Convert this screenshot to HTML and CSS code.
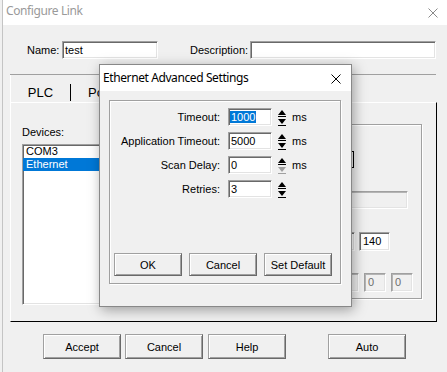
FILE: index.html
```html
<!DOCTYPE html>
<html lang="en">
<head>
    <meta charset="UTF-8">
    <meta name="viewport" content="width=device-width, initial-scale=1.0">
    <title>Configure Link</title>
    <link rel="stylesheet" href="styles.css">
</head>
<body>
    <div class="window">
        <div class="titlebar">
            <span class="title">Configure Link</span>
            <svg class="close" width="10" height="10" viewBox="0 0 10 10"><path d="M0.5 0.5 L9.5 9.5 M9.5 0.5 L0.5 9.5" stroke="#8a8a8a" stroke-width="1" fill="none"/></svg>
        </div>

        <div class="name-row">
            <span class="name-label">Name:</span>
            <div class="edit name-edit">test</div>
            <span class="desc-label">Description:</span>
            <div class="edit desc-edit"></div>
        </div>

        <div class="tabs">
            <div class="tab active">PLC</div>
            <div class="tab-sep"></div>
            <div class="tab">Port</div>
        </div>

        <div class="panel">
            <div class="devices">
                <div class="label">Devices:</div>
                <div class="edit listbox">
                    <div class="item">COM3</div>
                    <div class="item selected">Ethernet</div>
                </div>
            </div>
            <!-- right hand group, mostly hidden by the dialog -->
            <div class="plc-group">
                <div class="prow r1"><div class="bracket"></div></div>
                <div class="prow r2"><div class="edit disabled wide"></div></div>
                <div class="prow r3"><div class="edit part"></div><div class="edit num">140</div></div>
                <div class="prow r4"><div class="edit disabled part"></div><div class="edit disabled tiny">0</div><div class="edit disabled tiny">0</div></div>
            </div>
        </div>

        <div class="buttons">
            <button class="btn main-btn">Accept</button>
            <button class="btn main-btn cancel-btn">Cancel</button>
            <button class="btn main-btn help-btn">Help</button>
            <button class="btn main-btn auto-btn">Auto</button>
        </div>

        <div class="dialog">
            <div class="d-titlebar">
                <span class="d-title">Ethernet Advanced Settings</span>
                <svg class="d-close" width="10" height="10" viewBox="0 0 10 10"><path d="M0.5 0.5 L9.5 9.5 M9.5 0.5 L0.5 9.5" stroke="#000" stroke-width="1" fill="none"/></svg>
            </div>
            <div class="d-body">
                <div class="d-group">
                    <div class="d-fields">
                        <div class="d-row">
                            <span class="d-label">Timeout:</span>
                            <div class="edit spin-edit"><span class="sel">1000</span></div>
                            <svg class="spin" width="10" height="18" viewBox="0 0 10 18">
                                <path d="M1 7 L5 2 L9 7 Z" fill="#000"/>
                                <rect x="1" y="8" width="8" height="1" fill="#000"/>
                                <path d="M1 11 L9 11 L5 16 Z" fill="#000"/>
                                <rect x="1" y="17" width="8" height="1" fill="#000"/>
                            </svg>
                            <span class="unit">ms</span>
                        </div>
                        <div class="d-row">
                            <span class="d-label">Application Timeout:</span>
                            <div class="edit spin-edit">5000</div>
                            <svg class="spin" width="10" height="18" viewBox="0 0 10 18">
                                <path d="M1 7 L5 2 L9 7 Z" fill="#000"/>
                                <rect x="1" y="8" width="8" height="1" fill="#000"/>
                                <path d="M1 11 L9 11 L5 16 Z" fill="#000"/>
                                <rect x="1" y="17" width="8" height="1" fill="#000"/>
                            </svg>
                            <span class="unit">ms</span>
                        </div>
                        <div class="d-row">
                            <span class="d-label">Scan Delay:</span>
                            <div class="edit spin-edit">0</div>
                            <svg class="spin" width="10" height="18" viewBox="0 0 10 18">
                                <path d="M1 7 L5 2 L9 7 Z" fill="#000"/>
                                <rect x="1" y="8" width="8" height="1" fill="#000"/>
                                <path d="M1 11 L9 11 L5 16 Z" fill="#a0a0a0"/>
                                <rect x="1" y="17" width="8" height="1" fill="#a0a0a0"/>
                            </svg>
                            <span class="unit">ms</span>
                        </div>
                        <div class="d-row">
                            <span class="d-label">Retries:</span>
                            <div class="edit spin-edit">3</div>
                            <svg class="spin" width="10" height="18" viewBox="0 0 10 18">
                                <path d="M1 7 L5 2 L9 7 Z" fill="#000"/>
                                <rect x="1" y="8" width="8" height="1" fill="#000"/>
                                <path d="M1 11 L9 11 L5 16 Z" fill="#000"/>
                                <rect x="1" y="17" width="8" height="1" fill="#000"/>
                            </svg>
                        </div>
                    </div>
                    <div class="d-buttons">
                        <button class="btn d-btn">OK</button>
                        <button class="btn d-btn">Cancel</button>
                        <button class="btn d-btn">Set Default</button>
                    </div>
                </div>
            </div>
        </div>
    </div>
</body>
</html>
```

FILE: styles.css
```css
body {
    margin: 0;
    padding: 0;
    background: #f0f0f0;
    font-family: "Liberation Sans", Arial, sans-serif;
    font-size: 11px;
    color: #000;
    overflow: hidden;
}

.window {
    position: relative;
    margin-left: 2px;
    width: 444px;
    height: 372px;
    border-left: 1px solid #c4c4c4;
}

/* title bar */
.titlebar {
    display: flex;
    height: 25px;
    background: #fff;
    padding-left: 3px;
}

.title {
    font-family: "Noto Sans", sans-serif;
    font-size: 12px;
    letter-spacing: -0.4px;
    line-height: 22px;
    color: #9a9a9a;
}

.close {
    margin-left: auto;
    margin-right: 9px;
    margin-top: 8px;
}

/* name / description */
.name-row {
    display: flex;
    align-items: center;
    height: 18px;
    margin-top: 16px;
    padding-left: 24px;
}

.name-label {
    width: 35px;
}

.name-edit {
    width: 96px;
    height: 18px;
}

.desc-label {
    width: 60px;
    margin-left: 32px;
    white-space: nowrap;
}

.desc-edit {
    width: 186px;
    height: 18px;
}

/* sunken edit box */
.edit {
    box-sizing: border-box;
    background: #fff;
    border: 1px solid;
    border-color: #a0a0a0 #fff #fff #a0a0a0;
    box-shadow: inset 1px 1px 0 #696969, inset -1px -1px 0 #e3e3e3;
    padding-left: 2px;
    line-height: 16px;
    white-space: nowrap;
    overflow: hidden;
}

.edit.disabled {
    background: #f0f0f0;
    color: #6d6d6d;
    box-shadow: inset 1px 1px 0 #b4b4b4, inset -1px -1px 0 #e3e3e3;
}

/* tabs */
.tabs {
    display: flex;
    margin-top: 15px;
    margin-left: 7px;
    width: 426px;
    height: 28px;
    box-sizing: border-box;
    border-top: 1px solid #a0a0a0;
}

.tab {
    font-size: 13px;
    line-height: 15px;
    padding-top: 10px;
}

.tab.active {
    width: 60px;
    text-align: center;
    box-sizing: border-box;
    border-left: 1px solid #fff;
}

.tab-sep {
    width: 1px;
    height: 17px;
    margin-top: 9px;
    background: #000;
}

.tab-sep + .tab {
    padding-left: 17px;
}

/* panel */
.panel {
    display: flex;
    box-sizing: border-box;
    margin-left: 7px;
    width: 427px;
    height: 220px;
    border-top: 1px solid #fff;
    border-left: 1px solid #fff;
    border-right: 1px solid #000;
    border-bottom: 1px solid #000;
}

.devices {
    padding-left: 11px;
    padding-top: 23px;
}

.label {
    line-height: 13px;
}

.listbox {
    margin-top: 5px;
    width: 130px;
    height: 161px;
    padding-left: 0;
    line-height: 13px;
}

.item {
    height: 13px;
    padding-left: 3px;
}

.item.selected {
    background: #0078d7;
    color: #fff;
}

.plc-group {
    box-sizing: border-box;
    margin-left: auto;
    margin-right: 14px;
    margin-top: 21px;
    width: 250px;
    height: 175px;
    border: 1px solid #a0a0a0;
    box-shadow: inset 1px 1px 0 #fff, 1px 1px 0 #fff;
}

.prow {
    display: flex;
    justify-content: flex-end;
}

.r1 {
    margin-top: 26px;
    margin-right: 67px;
    height: 17px;
}

.bracket {
    box-sizing: border-box;
    width: 20px;
    height: 17px;
    border: 1px solid #000;
    border-left: none;
}

.r2 {
    margin-top: 23px;
    margin-right: 13px;
}

.wide {
    width: 150px;
    height: 18px;
}

.r3 {
    margin-top: 23px;
    margin-right: 31px;
    gap: 4px;
}

.part {
    width: 40px;
    height: 19px;
}

.num {
    width: 31px;
    height: 19px;
    padding-left: 3px;
    line-height: 17px;
}

.r4 {
    margin-top: 22px;
    margin-right: 8px;
    gap: 5px;
}

.tiny {
    width: 22px;
    height: 19px;
    padding-left: 3px;
    line-height: 17px;
}

/* buttons */
.btn {
    box-sizing: border-box;
    margin: 0;
    padding: 0;
    background: #f0f0f0;
    font-family: "Liberation Sans", Arial, sans-serif;
    font-size: 11px;
    color: #000;
    border: 1px solid;
    border-color: #a0a0a0 #696969 #696969 #a0a0a0;
    box-shadow: inset 1px 1px 0 #fff, inset -1px -1px 0 #a0a0a0;
}

.buttons {
    display: flex;
    margin-top: 12px;
    padding-left: 40px;
}

.main-btn {
    width: 78px;
    height: 25px;
}

.cancel-btn {
    margin-left: 4px;
}

.help-btn {
    margin-left: 5px;
}

.auto-btn {
    margin-left: 42px;
}

/* dialog on top */
.dialog {
    position: absolute;
    left: 96px;
    top: 64px;
    width: 253px;
    height: 243px;
    box-sizing: border-box;
    border: 1px solid #888;
    background: #f0f0f0;
    box-shadow: 2px 3px 12px rgba(0, 0, 0, 0.35);
}

.d-titlebar {
    display: flex;
    height: 26px;
    background: #fff;
    padding-left: 3px;
}

.d-title {
    font-family: "Noto Sans", sans-serif;
    font-size: 12px;
    letter-spacing: -0.4px;
    line-height: 25px;
}

.d-close {
    margin-left: auto;
    margin-right: 10px;
    margin-top: 9px;
}

.d-body {
    padding-top: 9px;
    padding-left: 9px;
}

.d-group {
    box-sizing: border-box;
    width: 232px;
    height: 184px;
    padding-top: 7px;
    border: 1px solid #a0a0a0;
    box-shadow: inset 1px 1px 0 #fff, 1px 1px 0 #fff;
}

.d-row {
    display: flex;
    align-items: center;
    height: 18px;
    margin-bottom: 6px;
}

.d-row:last-child {
    margin-bottom: 0;
}

.d-label {
    width: 110px;
    margin-right: 8px;
    text-align: right;
    white-space: nowrap;
}

.spin-edit {
    width: 44px;
    height: 18px;
}

.sel {
    background: #0078d7;
    color: #fff;
    margin-left: -1px;
    padding: 0 1px;
}

.spin {
    margin-left: 5px;
}

.unit {
    margin-left: 5px;
}

.d-buttons {
    display: flex;
    gap: 7px;
    margin-top: 55px;
    padding-left: 4px;
}

.d-btn {
    width: 68px;
    height: 23px;
}
```
